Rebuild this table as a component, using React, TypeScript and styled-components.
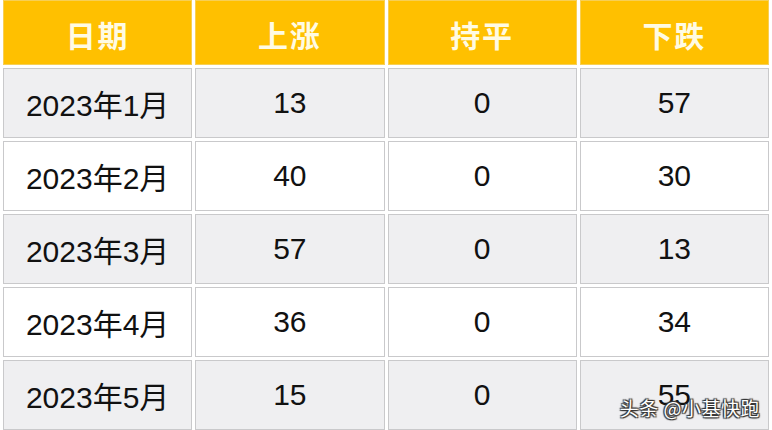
import styled, {createGlobalStyle} from 'styled-components';

const GlobalStyle = createGlobalStyle`
	html, body {
		margin: 0;
		padding: 0;
		background: #ffffff;
		overflow: hidden;
	}
`;

const Page = styled.div`
	position: relative;
	width: 772px;
	height: 430px;
	overflow: hidden;
	background: #ffffff;
`;

const Table = styled.table`
	width: 772px;
	margin-top: -3px;
	border-collapse: separate;
	border-spacing: 3px;
	table-layout: fixed;
`;

const HeadCell = styled.th`
	height: 65px;
	padding: 0;
	box-sizing: border-box;
	background: #ffc000;
	border: 1px solid #f7cf55;
	color: #fffbe3;
	font-family: 'Noto Sans CJK SC', sans-serif;
	font-size: 30px;
	font-weight: 700;
	letter-spacing: 2px;
	text-align: center;
	vertical-align: middle;
	padding-top: 3px;
`;

const Cell = styled.td<{$shade: boolean}>`
	height: 70px;
	padding: 0;
	box-sizing: border-box;
	background: ${(p) => (p.$shade ? '#efeff1' : '#ffffff')};
	border: 1px solid #c9c9cb;
	color: #111111;
	font-family: 'Liberation Sans Narrow', 'Liberation Sans', 'Noto Sans CJK SC', sans-serif;
	font-size: 30px;
	text-align: center;
	vertical-align: middle;
`;

const Watermark = styled.div`
	position: absolute;
	right: 12px;
	bottom: 9px;
	font-family: 'Noto Sans CJK SC', sans-serif;
	font-size: 19px;
	color: #ffffff;
	text-shadow:
		0 0 1px #333,
		1px 1px 1px #333,
		-1px -1px 1px #333,
		1px -1px 1px #333,
		-1px 1px 1px #333;
	letter-spacing: 0.5px;
`;

const headers = ['日期', '上涨', '持平', '下跌'];

const rows = [
	{month: '2023年1月', up: 13, flat: 0, down: 57},
	{month: '2023年2月', up: 40, flat: 0, down: 30},
	{month: '2023年3月', up: 57, flat: 0, down: 13},
	{month: '2023年4月', up: 36, flat: 0, down: 34},
	{month: '2023年5月', up: 15, flat: 0, down: 55},
];

export default function App() {
	return (
		<Page>
			<GlobalStyle />
			<Table>
				<thead>
					<tr>
						{headers.map((h) => (
							<HeadCell key={h}>{h}</HeadCell>
						))}
					</tr>
				</thead>
				<tbody>
					{rows.map((r, i) => (
						<tr key={r.month}>
							<Cell $shade={i % 2 === 0}>{r.month}</Cell>
							<Cell $shade={i % 2 === 0}>{r.up}</Cell>
							<Cell $shade={i % 2 === 0}>{r.flat}</Cell>
							<Cell $shade={i % 2 === 0}>{r.down}</Cell>
						</tr>
					))}
				</tbody>
			</Table>
			<Watermark>头条 @小基快跑</Watermark>
		</Page>
	);
}
